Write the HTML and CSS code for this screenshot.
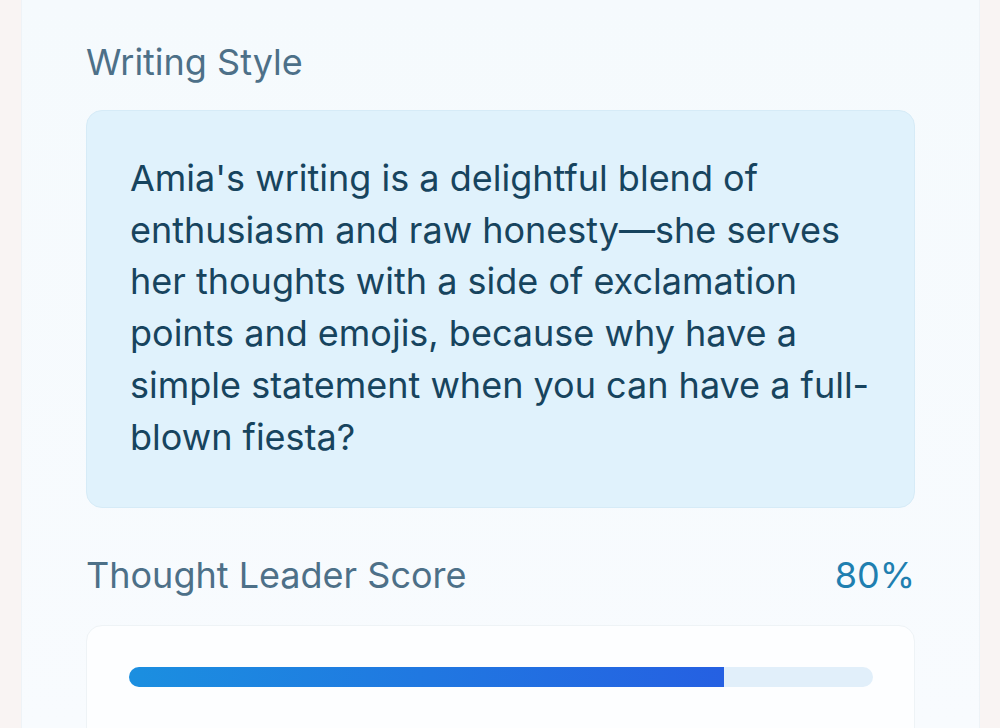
FILE: index.html
```html
<!DOCTYPE html>
<html>
<head>
<meta charset="utf-8">
<link rel="stylesheet" href="styles.css">
</head>
<body>
<div class="page">
  <section class="panel">
    <h2 class="label">Writing Style</h2>
    <div class="style-box">
      <p>Amia's writing is a delightful blend of enthusiasm and raw honesty—she serves her thoughts with a side of exclamation points and emojis, because why have a simple statement when you can have a full-blown fiesta?</p>
    </div>
    <div class="score-row">
      <h2 class="label">Thought Leader Score</h2>
      <span class="score-value">80%</span>
    </div>
    <div class="score-box">
      <div class="track"><div class="fill" style="width:80%"></div></div>
    </div>
  </section>
</div>
</body>
</html>
```

FILE: styles.css
```css
html, body {
  margin: 0;
  padding: 0;
  height: 100%;
  overflow: hidden;
}
body {
  background: #f9f4f3;
  font-family: Inter, "Noto Sans", sans-serif;
}
.page {
  padding: 0 20px 0 21px;
  height: 100%;
}
.panel {
  background: linear-gradient(180deg, #f5fafd, #f8fbfe);
  height: 100%;
  box-sizing: border-box;
  padding: 40px 64px 0 64px;
  border-left: 1px solid #eef3f7;
  border-right: 1px solid #eef3f7;
}
.label {
  margin: 0;
  font-size: 36px;
  font-weight: 400;
  color: #4d7088;
  line-height: 44px;
}
.style-box {
  margin-top: 26px;
  background: #e0f2fc;
  border: 1px solid #d6ebf7;
  border-radius: 16px;
  padding: 42px 44px 44px 43px;
}
.style-box p {
  margin: 0;
  font-size: 36px;
  line-height: 51.7px;
  color: #17445e;
}
.score-row {
  margin-top: 45px;
  display: flex;
  justify-content: space-between;
  align-items: baseline;
}
.score-value {
  font-size: 36px;
  line-height: 44px;
  color: #1f7fb0;
}
.score-box {
  margin-top: 28px;
  background: #fdfeff;
  border: 1px solid #eef3f6;
  border-radius: 16px;
  padding: 41px 41px 60px 42px;
}
.track {
  height: 20px;
  border-radius: 10px;
  background: #e1effa;
  overflow: hidden;
}
.fill {
  height: 100%;
  background: linear-gradient(90deg, #1b8fe0, #2560e2);
}
```
